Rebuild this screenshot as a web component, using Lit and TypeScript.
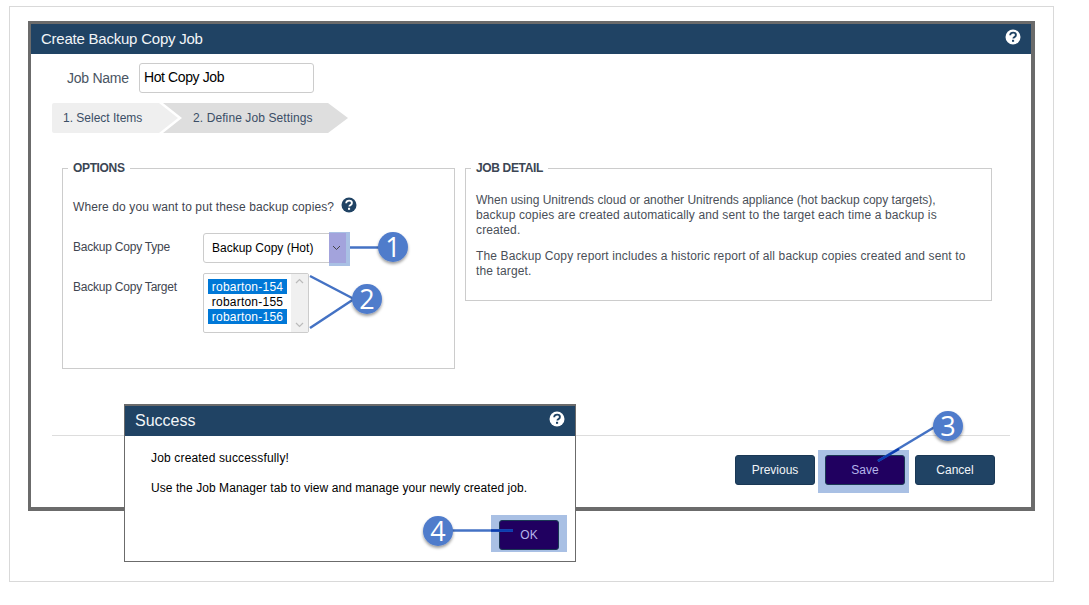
import { LitElement, html, css, svg } from "lit";
import { customElement } from "lit/decorators.js";

const help = (bg: string, fg: string) => html`<svg class="help" viewBox="0 0 16 16" width="16" height="16">
  <circle cx="8" cy="8" r="7.5" fill=${bg}></circle>
  <path d="M5.2 6.3c0-1.8 1.2-2.7 2.9-2.7 1.6 0 2.8.9 2.8 2.3 0 1.2-.7 1.7-1.5 2.2-.7.4-1 .7-1 1.5" fill="none" stroke=${fg} stroke-width="1.9"></path>
  <rect x="7" y="10.8" width="2.1" height="2" fill=${fg}></rect>
</svg>`;

const badge = (cx: number, cy: number, n: string) => svg`
  <circle cx=${cx} cy=${cy} r="15" fill="#4f7bcb" filter="url(#sh)"></circle>
  <text x=${cx} y=${cy + 10} text-anchor="middle" class="num">${n}</text>`;

@customElement("app-root")
export class AppRoot extends LitElement {
  static styles = css`
    :host { display: block; position: relative; width: 1089px; height: 605px; overflow: hidden; background: #fff; font-family: "Liberation Sans", Arial, sans-serif; font-size: 12px; color: #3f4650; }
    * { box-sizing: border-box; }
    .frame { margin: 6px 0 0 9px; width: 1045px; height: 576px; border: 1px solid #d9d9d9; padding: 14px 0 0 18px; }
    .dialog { width: 1007px; height: 490px; border: solid #6b6b6b; border-width: 3px 4px 4px 3px; background: #fff; }
    .head { height: 30px; background: #204364; color: #f2f5f8; display: flex; align-items: center; justify-content: space-between; padding: 0 10px; font-size: 15px; letter-spacing: -0.23px; }
    .head span { padding-bottom: 2px; }
    .head .help { margin-top: -5px; margin-right: 0; }
    .jobrow { display: flex; align-items: center; margin: 9px 0 0 36px; font-size: 14px; color: #4a5563; }
    .jobrow > span { width: 72px; letter-spacing: -0.25px; }
    .input { width: 175px; height: 30px; border: 1px solid #ccc; border-radius: 3px; padding: 0 4px 2px; display: flex; align-items: center; color: #000; font-size: 14px; letter-spacing: -0.4px; }
    .steps { display: flex; margin: 10px 0 0 21px; height: 30px; color: #3b4e66; }
    .step { height: 30px; display: flex; align-items: center; }
    .s1 { width: 126px; background: #efefef; padding-left: 11px; border-radius: 2px 0 0 2px; clip-path: polygon(0 0, 107px 0, 126px 15px, 107px 30px, 0 30px); }
    .s2 { width: 185px; margin-left: -15px; background: #dedede; padding-left: 30px; letter-spacing: 0.1px; clip-path: polygon(0 0, 165px 0, 185px 15px, 165px 30px, 0 30px, 19px 15px); }
    .sets { display: flex; gap: 10px; margin: 28px 0 0 31px; align-items: flex-start; }
    fieldset { margin: 0; padding: 0 10px; border: 1px solid #ccc; min-width: 0; }
    legend { padding: 0 5px; margin-left: -5px; font-weight: bold; line-height: 14px; color: #3b4654; letter-spacing: -0.35px; }
    .opt { width: 393px; height: 208px; }
    .det { width: 527px; height: 140px; color: #4a4f58; }
    .q { display: flex; align-items: center; gap: 7px; margin-top: 23px; height: 16px; letter-spacing: 0.11px; }
    .q > span { padding-top: 2px; }
    .q .help { margin-top: -2px; }
    .row { display: grid; grid-template-columns: 130px auto; align-items: start; }
    .lab { letter-spacing: -0.22px; }
    .r1 { margin-top: 19px; align-items: center; }
    .r1 .lab { padding-bottom: 2px; }
    .r2 { margin-top: 10px; }
    .r2 .lab { padding-top: 7px; }
    .select { position: relative; width: 144px; height: 30px; border: 1px solid #ccc; border-radius: 3px; display: flex; align-items: center; padding-left: 8px; color: #000; }
    .arrow { position: absolute; z-index: 1; left: 125px; top: -1px; width: 17px; height: 30px; background: #a3a3dc; display: flex; align-items: center; justify-content: center; }
    .arrow::before { content: ""; position: absolute; z-index: -1; left: 0; top: -1px; width: 21px; height: 34px; background: #a9c0e4; }
    .arrow i { position: absolute; inset: 0; background: #a3a3dc; }
    .arrow svg { position: relative; left: -1px; }
    .list { position: relative; width: 106px; height: 60px; border: 1px solid #ccc; border-radius: 2px; padding: 5px 0 0 4px; color: #000; letter-spacing: 0.22px; }
    .o { width: 79px; height: 15px; line-height: 17px; text-align: center; }
    .o.sel { background: #0078d7; color: #fff; }
    .bar { position: absolute; top: 0; right: 0; width: 17px; height: 58px; background: #f0f0f0; display: flex; flex-direction: column; justify-content: space-between; align-items: center; padding: 4px 0; }
    .det p { margin: 0; line-height: 15px; width: 495px; letter-spacing: 0.125px; }
    .det p:first-of-type { margin-top: 18px; }
    .det p + p { margin-top: 11px; }
    .flat { letter-spacing: 0; }
    .rule { margin: 66px 0 0 21px; width: 958px; height: 1px; background: #ddd; }
    .btns { display: flex; justify-content: flex-end; gap: 10px; margin: 19px 36px 0 0; isolation: isolate; }
    .btn { position: relative; width: 80px; height: 30px; border: 1px solid #1a3855; border-radius: 3px; background: #204364; color: #f2f5f8; display: flex; align-items: center; justify-content: center; }
    .btn.hl { background: #200060; color: #b4b4ea; }
    .btn.hl::before { content: ""; position: absolute; z-index: -1; background: #a9c0e4; }
    .save::before { inset: -6px -5px -9px -8px; }
    .ok { width: 60px; }
    .ok::before { inset: -6px -9px -3px -9px; }
    .success { position: absolute; left: 124px; top: 404px; width: 452px; height: 158px; border: 1px solid #6b6b6b; border-top-width: 2px; background: #fff; color: #000; }
    .shead { height: 30px; background: #204364; color: #f2f5f8; font-size: 16px; display: flex; align-items: center; justify-content: space-between; padding: 0 10px; }
    .shead .help { margin-top: -5px; margin-right: 0; }
    .success p { margin: 0 0 0 26px; line-height: 16px; letter-spacing: 0.06px; }
    .success p:first-of-type { margin-top: 14px; letter-spacing: 0.16px; }
    .success p + p { margin-top: 14px; }
    .sfoot { display: flex; justify-content: flex-end; margin: 24px 16px 0 0; isolation: isolate; }
    .over { position: absolute; inset: 0; pointer-events: none; }
    .num { font: 27px "Open Sans", "Liberation Sans", sans-serif; fill: #fff; }
  `;

  render() {
    return html`
      <div class="frame">
        <div class="dialog">
          <div class="head"><span>Create Backup Copy Job</span>${help("#fff", "#204364")}</div>
          <div class="jobrow"><span>Job Name</span><div class="input">Hot Copy Job</div></div>
          <div class="steps">
            <div class="step s1">1. Select Items</div>
            <div class="step s2">2. Define Job Settings</div>
          </div>
          <div class="sets">
            <fieldset class="opt">
              <legend>OPTIONS</legend>
              <div class="q"><span>Where do you want to put these backup copies?</span>${help("#204364", "#fff")}</div>
              <div class="row r1">
                <span class="lab">Backup Copy Type</span>
                <div class="select">Backup Copy (Hot)
                  <div class="arrow"><i></i><svg width="9" height="6" viewBox="0 0 9 6"><path d="M1 1l3.5 3.5L8 1" fill="none" stroke="#444" stroke-width="1"></path></svg></div>
                </div>
              </div>
              <div class="row r2">
                <span class="lab">Backup Copy Target</span>
                <div class="list">
                  <div class="o sel">robarton-154</div>
                  <div class="o">robarton-155</div>
                  <div class="o sel">robarton-156</div>
                  <div class="bar">
                    <svg width="9" height="6" viewBox="0 0 9 6"><path d="M1 5l3.5-3.5L8 5" fill="none" stroke="#bbb" stroke-width="1.2"></path></svg>
                    <svg width="9" height="6" viewBox="0 0 9 6"><path d="M1 1l3.5 3.5L8 1" fill="none" stroke="#bbb" stroke-width="1.2"></path></svg>
                  </div>
                </div>
              </div>
            </fieldset>
            <fieldset class="det">
              <legend>JOB DETAIL</legend>
              <p><span class="flat">When using Unitrends cloud or another Unitrends appliance (hot backup copy targets),</span> backup copies are created automatically and sent to the target each time a backup is created.</p>
              <p>The Backup Copy report includes a historic report of all backup copies created and sent to the target.</p>
            </fieldset>
          </div>
          <div class="rule"></div>
          <div class="btns">
            <div class="btn">Previous</div>
            <div class="btn hl save">Save</div>
            <div class="btn">Cancel</div>
          </div>
        </div>
      </div>
      <div class="success">
        <div class="shead"><span>Success</span>${help("#fff", "#204364")}</div>
        <p>Job created successfully!</p>
        <p>Use the Job Manager tab to view and manage your newly created job.</p>
        <div class="sfoot"><div class="btn hl ok">OK</div></div>
      </div>
      <svg class="over" width="1089" height="605" viewBox="0 0 1089 605">
        <defs><filter id="sh" x="-30%" y="-30%" width="160%" height="170%"><feDropShadow dx="0" dy="2" stdDeviation="1.5" flood-color="#000" flood-opacity=".4"></feDropShadow></filter></defs>
        <g fill="none" stroke="#4472c4" stroke-width="2.5">
          <path d="M347 247.5H382"></path>
          <path d="M310 276L354 299M310 328L354 299"></path>
          <path d="M878 461L938 425"></path>
          <path d="M452 530.5H513"></path>
        </g>
        <g fill="none" stroke="#0a3cb0" stroke-width="2.5">
          <path d="M343 247.5H350"></path>
          <path d="M878 461L899 449"></path>
          <path d="M491 530.5H513"></path>
        </g>
        ${badge(393, 247, "1")}${badge(367, 299, "2")}${badge(948, 426, "3")}${badge(438, 531, "4")}
      </svg>
    `;
  }
}
